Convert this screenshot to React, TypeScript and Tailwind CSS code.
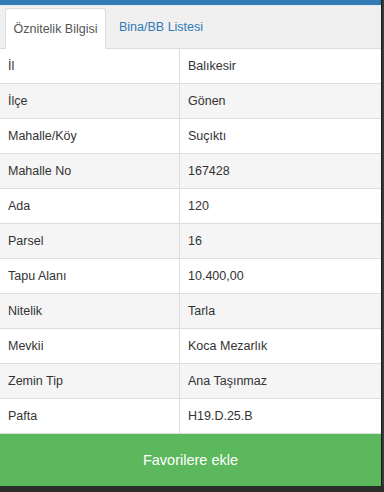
import React from "react";

const rows: [string, string][] = [
  ["İl", "Balıkesir"],
  ["İlçe", "Gönen"],
  ["Mahalle/Köy", "Suçıktı"],
  ["Mahalle No", "167428"],
  ["Ada", "120"],
  ["Parsel", "16"],
  ["Tapu Alanı", "10.400,00"],
  ["Nitelik", "Tarla"],
  ["Mevkii", "Koca Mezarlık"],
  ["Zemin Tip", "Ana Taşınmaz"],
  ["Pafta", "H19.D.25.B"],
];

export default function App() {
  return (
    <div
      className="w-[384px] h-[492px] bg-[#1c1f1c] flex flex-col overflow-hidden text-[#333]"
      style={{ fontFamily: '"Liberation Sans", Arial, sans-serif' }}
    >
      <div className="flex h-[486px]">
        <div className="w-[381px] flex flex-col bg-white">
          <div className="h-[5px] bg-[#337ab7]" />
          <div className="h-px bg-[#e4ecf4]" />
          <div className="h-[43px] bg-[#f0f0f0] border-b border-[#dddddd] flex items-end pl-[5px]">
            <div className="h-[41px] w-[101px] bg-white border border-b-0 border-[#dddddd] rounded-t-[3px] flex items-center justify-center text-[12.5px] text-[#555] -mb-px">
              Öznitelik Bilgisi
            </div>
            <div className="h-[41px] px-[13px] flex items-center text-[12.5px] text-[#337ab7]">
              Bina/BB Listesi
            </div>
          </div>
          <div className="flex flex-col">
            {rows.map(([k, v], i) => (
              <div
                key={k}
                className={`flex h-[35px] border-b border-[#dddddd] text-[12.5px] ${
                  i % 2 === 1 ? "bg-[#f5f5f5]" : "bg-white"
                }`}
              >
                <div className="w-[180px] border-r border-[#dddddd] flex items-center pl-[8px] pt-px">
                  {k}
                </div>
                <div className="flex-1 flex items-center pl-[8px] pt-px">{v}</div>
              </div>
            ))}
          </div>
          <div className="flex-1 bg-[#5cb85c] flex items-center justify-center text-white text-[14.5px] pt-[2px]">
            Favorilere ekle
          </div>
        </div>
        <div className="w-[3px] bg-[#3a3a3a] border-l border-[#1a1a1a]" />
      </div>
      <div className="flex-1 bg-[#2a2d28]" />
    </div>
  );
}
